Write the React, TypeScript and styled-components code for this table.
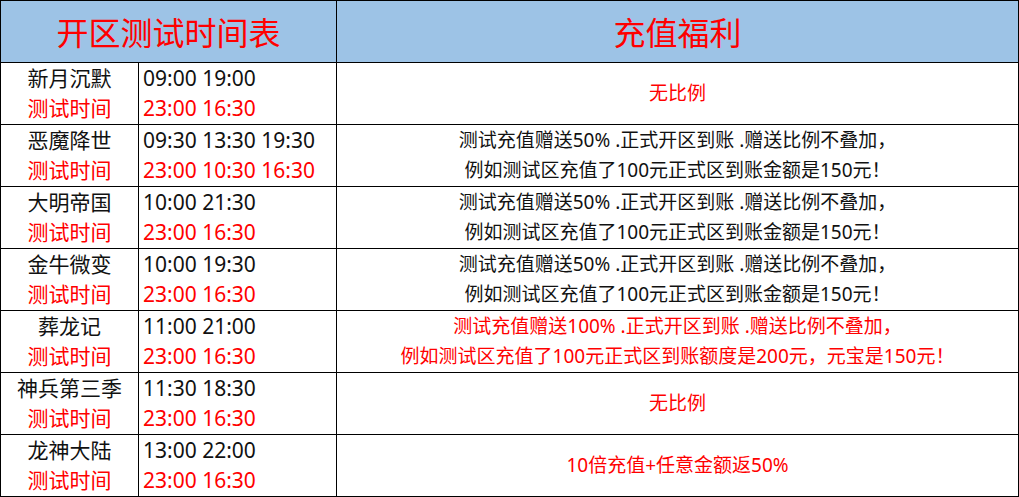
import React from "react";
import styled, { createGlobalStyle } from "styled-components";

type Row = {
  name: string;
  open: string;
  test: string;
  bonus: string[];
  red?: boolean;
};

const ROWS: Row[] = [
  { name: "新月沉默", open: "09:00 19:00", test: "23:00 16:30", bonus: ["无比例"], red: true },
  {
    name: "恶魔降世",
    open: "09:30 13:30 19:30",
    test: "23:00 10:30 16:30",
    bonus: ["测试充值赠送50% .正式开区到账 .赠送比例不叠加，", "例如测试区充值了100元正式区到账金额是150元！"],
  },
  {
    name: "大明帝国",
    open: "10:00 21:30",
    test: "23:00 16:30",
    bonus: ["测试充值赠送50% .正式开区到账 .赠送比例不叠加，", "例如测试区充值了100元正式区到账金额是150元！"],
  },
  {
    name: "金牛微变",
    open: "10:00 19:30",
    test: "23:00 16:30",
    bonus: ["测试充值赠送50% .正式开区到账 .赠送比例不叠加，", "例如测试区充值了100元正式区到账金额是150元！"],
  },
  {
    name: "葬龙记",
    open: "11:00 21:00",
    test: "23:00 16:30",
    bonus: ["测试充值赠送100% .正式开区到账 .赠送比例不叠加，", "例如测试区充值了100元正式区到账额度是200元，元宝是150元！"],
    red: true,
  },
  { name: "神兵第三季", open: "11:30 18:30", test: "23:00 16:30", bonus: ["无比例"], red: true },
  { name: "龙神大陆", open: "13:00 22:00", test: "23:00 16:30", bonus: ["10倍充值+任意金额返50%"], red: true },
];

export default function App() {
  return (
    <>
      <GlobalStyle />
      <Grid>
        <HeadCell $span={2}>开区测试时间表</HeadCell>
        <HeadCell>充值福利</HeadCell>
        {ROWS.map((row) => (
          <React.Fragment key={row.name}>
            <NameCell>
              <Line>{row.name}</Line>
              <Line $red>测试时间</Line>
            </NameCell>
            <TimeCell>
              <Line>{row.open}</Line>
              <Line $red>{row.test}</Line>
            </TimeCell>
            <BonusCell $red={row.red}>
              {row.bonus.map((b) => (
                <Line key={b}>{b}</Line>
              ))}
            </BonusCell>
          </React.Fragment>
        ))}
      </Grid>
    </>
  );
}

const GlobalStyle = createGlobalStyle`
  html, body {
    margin: 0;
    padding: 0;
    background: #fff;
  }
  body {
    font-family: "Noto Sans", "Noto Sans CJK SC", sans-serif;
  }
`;

const Grid = styled.div`
  display: grid;
  grid-template-columns: 137px 197px 681px;
  grid-auto-rows: 61px;
  gap: 1px;
  padding: 1px;
  width: 1019px;
  box-sizing: border-box;
  background: #000;
`;

const HeadCell = styled.div<{ $span?: number }>`
  grid-column: span ${(p) => p.$span ?? 1};
  background: #9dc3e6;
  color: #ff0000;
  font-size: 32px;
  display: flex;
  align-items: center;
  justify-content: center;
  padding-bottom: 2px;
`;

const Cell = styled.div`
  background: #fff;
  display: flex;
  flex-direction: column;
  justify-content: center;
  padding-bottom: 2px;
  color: #111;
`;

const NameCell = styled(Cell)`
  align-items: center;
  font-size: 21px;
`;

const TimeCell = styled(Cell)`
  align-items: flex-start;
  padding-left: 4px;
  font-size: 21px;
`;

const BonusCell = styled(Cell)<{ $red?: boolean }>`
  align-items: center;
  font-size: 19px;
  color: ${(p) => (p.$red ? "#ff0000" : "#111")};
`;

const Line = styled.div<{ $red?: boolean }>`
  line-height: 30px;
  white-space: nowrap;
  color: ${(p) => (p.$red ? "#ff0000" : "inherit")};
`;
